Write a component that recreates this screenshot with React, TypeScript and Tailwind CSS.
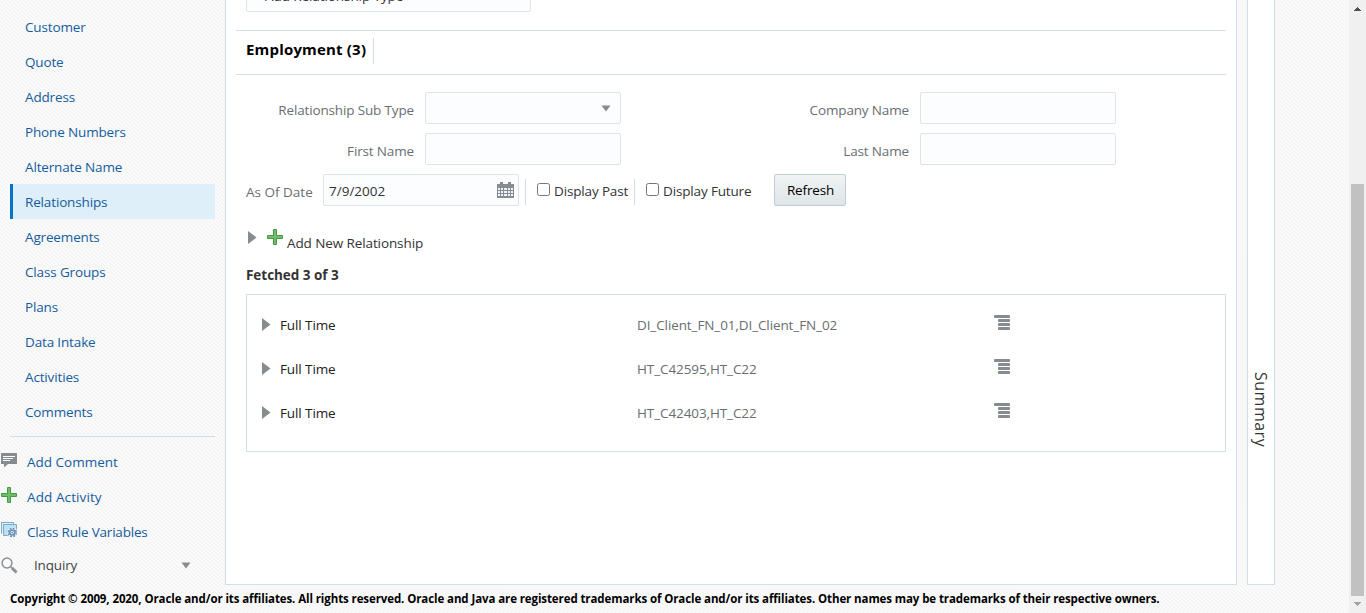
import React from "react";

const links: string[] = [
  "Customer",
  "Quote",
  "Address",
  "Phone Numbers",
  "Alternate Name",
  "Relationships",
  "Agreements",
  "Class Groups",
  "Plans",
  "Data Intake",
  "Activities",
  "Comments",
];

const rows = ["DI_Client_FN_01,DI_Client_FN_02", "HT_C42595,HT_C22", "HT_C42403,HT_C22"];

function Plus() {
  return (
    <svg width="16" height="16" viewBox="0 0 16 16" className="shrink-0">
      <path d="M6.5.5h3v6h6v3h-6v6h-3v-6h-6v-3h6z" fill="#6cc067" stroke="#479746" strokeLinejoin="round" />
    </svg>
  );
}

function CommentIcon() {
  return (
    <svg width="16" height="16" viewBox="0 0 16 16">
      <path d="M.5 1h15q.5 0 .5.500v10q0 .5-.5.500H7l-4 3.500v-3.500H.5q-.5 0-.5-.5v-10Q0 1 .5 1z" fill="#878c91" />
      <path d="M2 4.500h12M2 6.500h10M2 8.500h7" stroke="#fff" />
    </svg>
  );
}

function RuleIcon() {
  return (
    <svg width="16" height="16" viewBox="0 0 16 16">
      <path d="M.5 11.500V.5h12v2" fill="#d9f1fa" stroke="#7fa9c4" />
      <path d="M2.500 2.500h13v5L8 13.500H2.500z" fill="#b5e4f6" stroke="#7fa9c4" />
      <circle cx="11.200" cy="10.500" r="5.300" fill="#eef6fb" />
      <circle cx="11.200" cy="10.500" r="4" fill="none" stroke="#6c8fb8" strokeWidth="1.600" strokeDasharray="1.900 1.240" />
      <circle cx="11.200" cy="10.500" r="2.500" fill="#dce9f5" stroke="#6c8fb8" strokeWidth="1.600" />
      <circle cx="11.200" cy="10.500" r=".8" fill="#5d82ad" />
    </svg>
  );
}

function SearchIcon() {
  return (
    <svg width="17" height="17" viewBox="0 0 17 17">
      <circle cx="6" cy="6" r="4.900" fill="#fafafa" stroke="#8b9095" strokeWidth="1.500" />
      <path d="M9.500 9.500l2 2" stroke="#8b9095" strokeWidth="1.500" />
      <path d="M11 11l4.500 4.500" stroke="#8b9095" strokeWidth="3" />
    </svg>
  );
}

function CalendarIcon() {
  return (
    <svg width="17" height="17" viewBox="0 0 17 17" shapeRendering="crispEdges">
      <path d="M0 2h17v14H0z" fill="#878c91" />
      <path d="M3 0h3v3H3zM11 0h3v3h-3z" fill="#878c91" />
      <path d="M1 6h2v2H1zM4 6h2v2H4zM7 6h3v2H7zM11 6h2v2h-2zM14 6h2v2h-2zM1 9h2v2H1zM4 9h2v2H4zM7 9h3v2H7zM11 9h2v2h-2zM14 9h2v2h-2zM1 12h2v2H1zM4 12h2v2H4zM7 12h3v2H7zM11 12h2v2h-2zM14 12h2v2h-2z" fill="#eef4fa" />
    </svg>
  );
}

function ListIcon() {
  return (
    <svg width="16" height="15" viewBox="0 0 16 15">
      <rect width="16" height="3" rx=".7" fill="#878c91" />
      <rect x="4" y="4" width="12" height="3" rx=".7" fill="#878c91" />
      <rect x="4" y="8" width="12" height="3" rx=".7" fill="#878c91" />
      <rect x="4" y="12" width="12" height="3" rx=".7" fill="#878c91" />
    </svg>
  );
}

function Right() {
  return (
    <svg width="9" height="13" viewBox="0 0 9 13" className="shrink-0">
      <path d="M0 0l8.500 6.500L0 13z" fill="#878c91" />
    </svg>
  );
}

function Down() {
  return (
    <svg width="10" height="7" viewBox="0 0 10 7" className="shrink-0">
      <path d="M.5.5h9L5 6.500z" fill="#878c91" />
    </svg>
  );
}

function Field({ label, children }: { label: string; children?: React.ReactNode }) {
  return (
    <div className="flex h-8">
      <span className="flex h-9 flex-1 items-center justify-end pr-[11px] text-[#6a6e72]">{label}</span>
      <div className="flex h-8 w-[196px] shrink-0 items-center justify-end rounded-[2px] border border-[#dfe4e7] bg-[#fcfdfe] pr-[9px]">{children}</div>
    </div>
  );
}

function Check({ label }: { label: string }) {
  return (
    <div className="flex">
      <span className="mt-[9px] h-[13px] w-[13px] rounded-[2.500px] border border-[#767676] bg-white" />
      <span className="ml-1 mt-[7px] text-[#333]">{label}</span>
    </div>
  );
}

export default function App() {
  return (
    <div className="flex h-[613px] w-[1366px] overflow-hidden whitespace-nowrap bg-[#fafafa] bg-[repeating-linear-gradient(45deg,#f2f2f2_0px,#fafafa_0.7071px,#fafafa_2.1213px,#f2f2f2_2.8284px)] font-['Open_Sans','Noto_Sans',sans-serif] text-[13.500px] leading-5 tracking-[-0.15px]">
      <div className="flex w-[1349px] flex-col">
        <div className="flex h-[585px]">
          <nav className="w-[225px] pt-[9px] text-[#145c9e]">
            {links.map((l) => (
              <div
                key={l}
                className={
                  "ml-[10px] flex h-[35px] w-[205px] items-center pt-px " +
                  (l === "Relationships" ? "border-l-[3px] border-[#0572ce] bg-[#deeff9] pl-3" : "pl-[15px]")
                }
              >
                {l}
              </div>
            ))}
            <div className="ml-[10px] mt-[7px] w-[205px] border-t border-[#cfdfe6]" />
            <div className="mt-[7px] flex h-[35px] items-center">
              <span className="ml-px w-[26px] pb-[3px]"><CommentIcon /></span>
              <span className="tracking-[0px]">Add Comment</span>
            </div>
            <div className="flex h-[35px] items-center">
              <span className="ml-px w-[26px] pb-[3px]"><Plus /></span>
              <span className="tracking-[0.1px]">Add Activity</span>
            </div>
            <div className="flex h-[35px] items-center">
              <span className="ml-px w-[26px] pb-[3px]"><RuleIcon /></span>
              <span className="tracking-[-0.2px]">Class Rule Variables</span>
            </div>
            <div className="flex h-[32px] items-center text-[#444]">
              <span className="ml-px w-[33px]"><SearchIcon /></span>
              <span className="w-[147px]">Inquiry</span>
              <Down />
            </div>
          </nav>

          <main className="h-[585px] w-[1012px] overflow-hidden border border-t-0 border-[#d1dfe7] bg-white px-[10px]">
            <div className="ml-[10px] mt-[-20px] flex h-8 w-[285px] items-center rounded-[2px] border border-[#dfe4e7] bg-[#fcfdfe] pl-[18px] tracking-[-0.08px] text-[#333]">
              Add Relationship Type
            </div>
            <div className="mt-[18px] flex h-[45px] border-y border-[#d1dfe7] pl-[10px]">
              <h2 className="mt-[7px] h-[26px] w-[128px] border-r border-[#d1dfe7] text-[15px] font-bold leading-[22px] tracking-[0.18px] text-black">Employment (3)</h2>
            </div>
            <div className="mt-[17px] flex">
              <div className="flex w-[385px] flex-col gap-[9px]">
                <Field label="Relationship Sub Type"><Down /></Field>
                <Field label="First Name" />
              </div>
              <div className="ml-[180px] flex w-[315px] flex-col gap-[9px]">
                <Field label="Company Name" />
                <Field label="Last Name" />
              </div>
            </div>
            <div className="ml-[10px] mt-[9px] flex h-8">
              <span className="mt-2 w-[77px] tracking-normal text-[#6a6e72]">As Of Date</span>
              <div className="flex w-[196px] items-center justify-between rounded-[2px] border border-[#dfe4e7] bg-[#fcfdfe] pl-[5px] pr-1 text-[#333]">
                <span className="pt-px tracking-[0px]">7/9/2002</span>
                <CalendarIcon />
              </div>
              <div className="ml-[6px] mt-[5px] h-[26px] w-3 border-l border-[#d1dfe7]" />
              <div className="w-[97px]"><Check label="Display Past" /></div>
              <div className="mt-[5px] h-[26px] w-3 border-l border-[#d1dfe7]" />
              <div className="w-[128px]"><Check label="Display Future" /></div>
              <button className="h-8 w-[72px] rounded-[2px] border border-[#c0ccd5] bg-linear-to-b from-[#f1f4f5] to-[#dfe4e7] pl-px text-black">Refresh</button>
            </div>
            <div className="ml-[12px] mt-[24px] flex h-[26px]">
              <span className="mt-px w-[19px]"><Right /></span>
              <span className="-mt-px"><Plus /></span>
              <span className="ml-1 mt-[3px] tracking-[-0.1px] text-[#333]">Add New Relationship</span>
            </div>
            <div className="ml-[10px] mt-[9px] font-bold tracking-[-0.04px] text-[#333]">Fetched 3 of 3</div>
            <div className="ml-[10px] mt-[9px] h-[158px] w-[980px] border border-[#d1dfe7] pt-[7px]">
              {rows.map((r) => (
                <div key={r} className="flex h-11 items-center pl-[15px]">
                  <span className="w-[18px]"><Right /></span>
                  <span className="w-[357px] pt-px tracking-[-0.1px] text-[#222]">Full Time</span>
                  <span className="w-[357px] pt-px tracking-[-0.1px] text-[#6a6e72]">{r}</span>
                  <span className="pb-[3px]"><ListIcon /></span>
                </div>
              ))}
            </div>
          </main>

          <aside className="ml-[10px] flex h-[585px] w-7 justify-center border border-t-0 border-[#d1dfe7] bg-white pt-[372px] text-[#333]">
            <span className="text-[16px] leading-6 tracking-[0.500px] [writing-mode:vertical-rl]">Summary</span>
          </aside>
        </div>
        <footer className="pl-[10px] pt-1 text-[11.500px] font-bold tracking-[-0.097px] text-black">
          Copyright © 2009, 2020, Oracle and/or its affiliates. All rights reserved. Oracle and Java are registered trademarks of Oracle and/or its affiliates. Other names may be trademarks of their respective owners.
        </footer>
      </div>
      <div className="flex w-[17px] flex-col items-center bg-[#f0f0f0]">
        <svg width="7" height="4" viewBox="0 0 7 4" className="mt-[7px]" shapeRendering="crispEdges"><path d="M0 4h7L3.500 0z" fill="#505050" /></svg>
        <div className="mt-[173px] h-[412px] w-[13px] bg-[#c1c1c1]" />
        <svg width="7" height="4" viewBox="0 0 7 4" className="mt-[6px]" shapeRendering="crispEdges"><path d="M0 0h7L3.500 4z" fill="#a3a3a3" /></svg>
      </div>
    </div>
  );
}
